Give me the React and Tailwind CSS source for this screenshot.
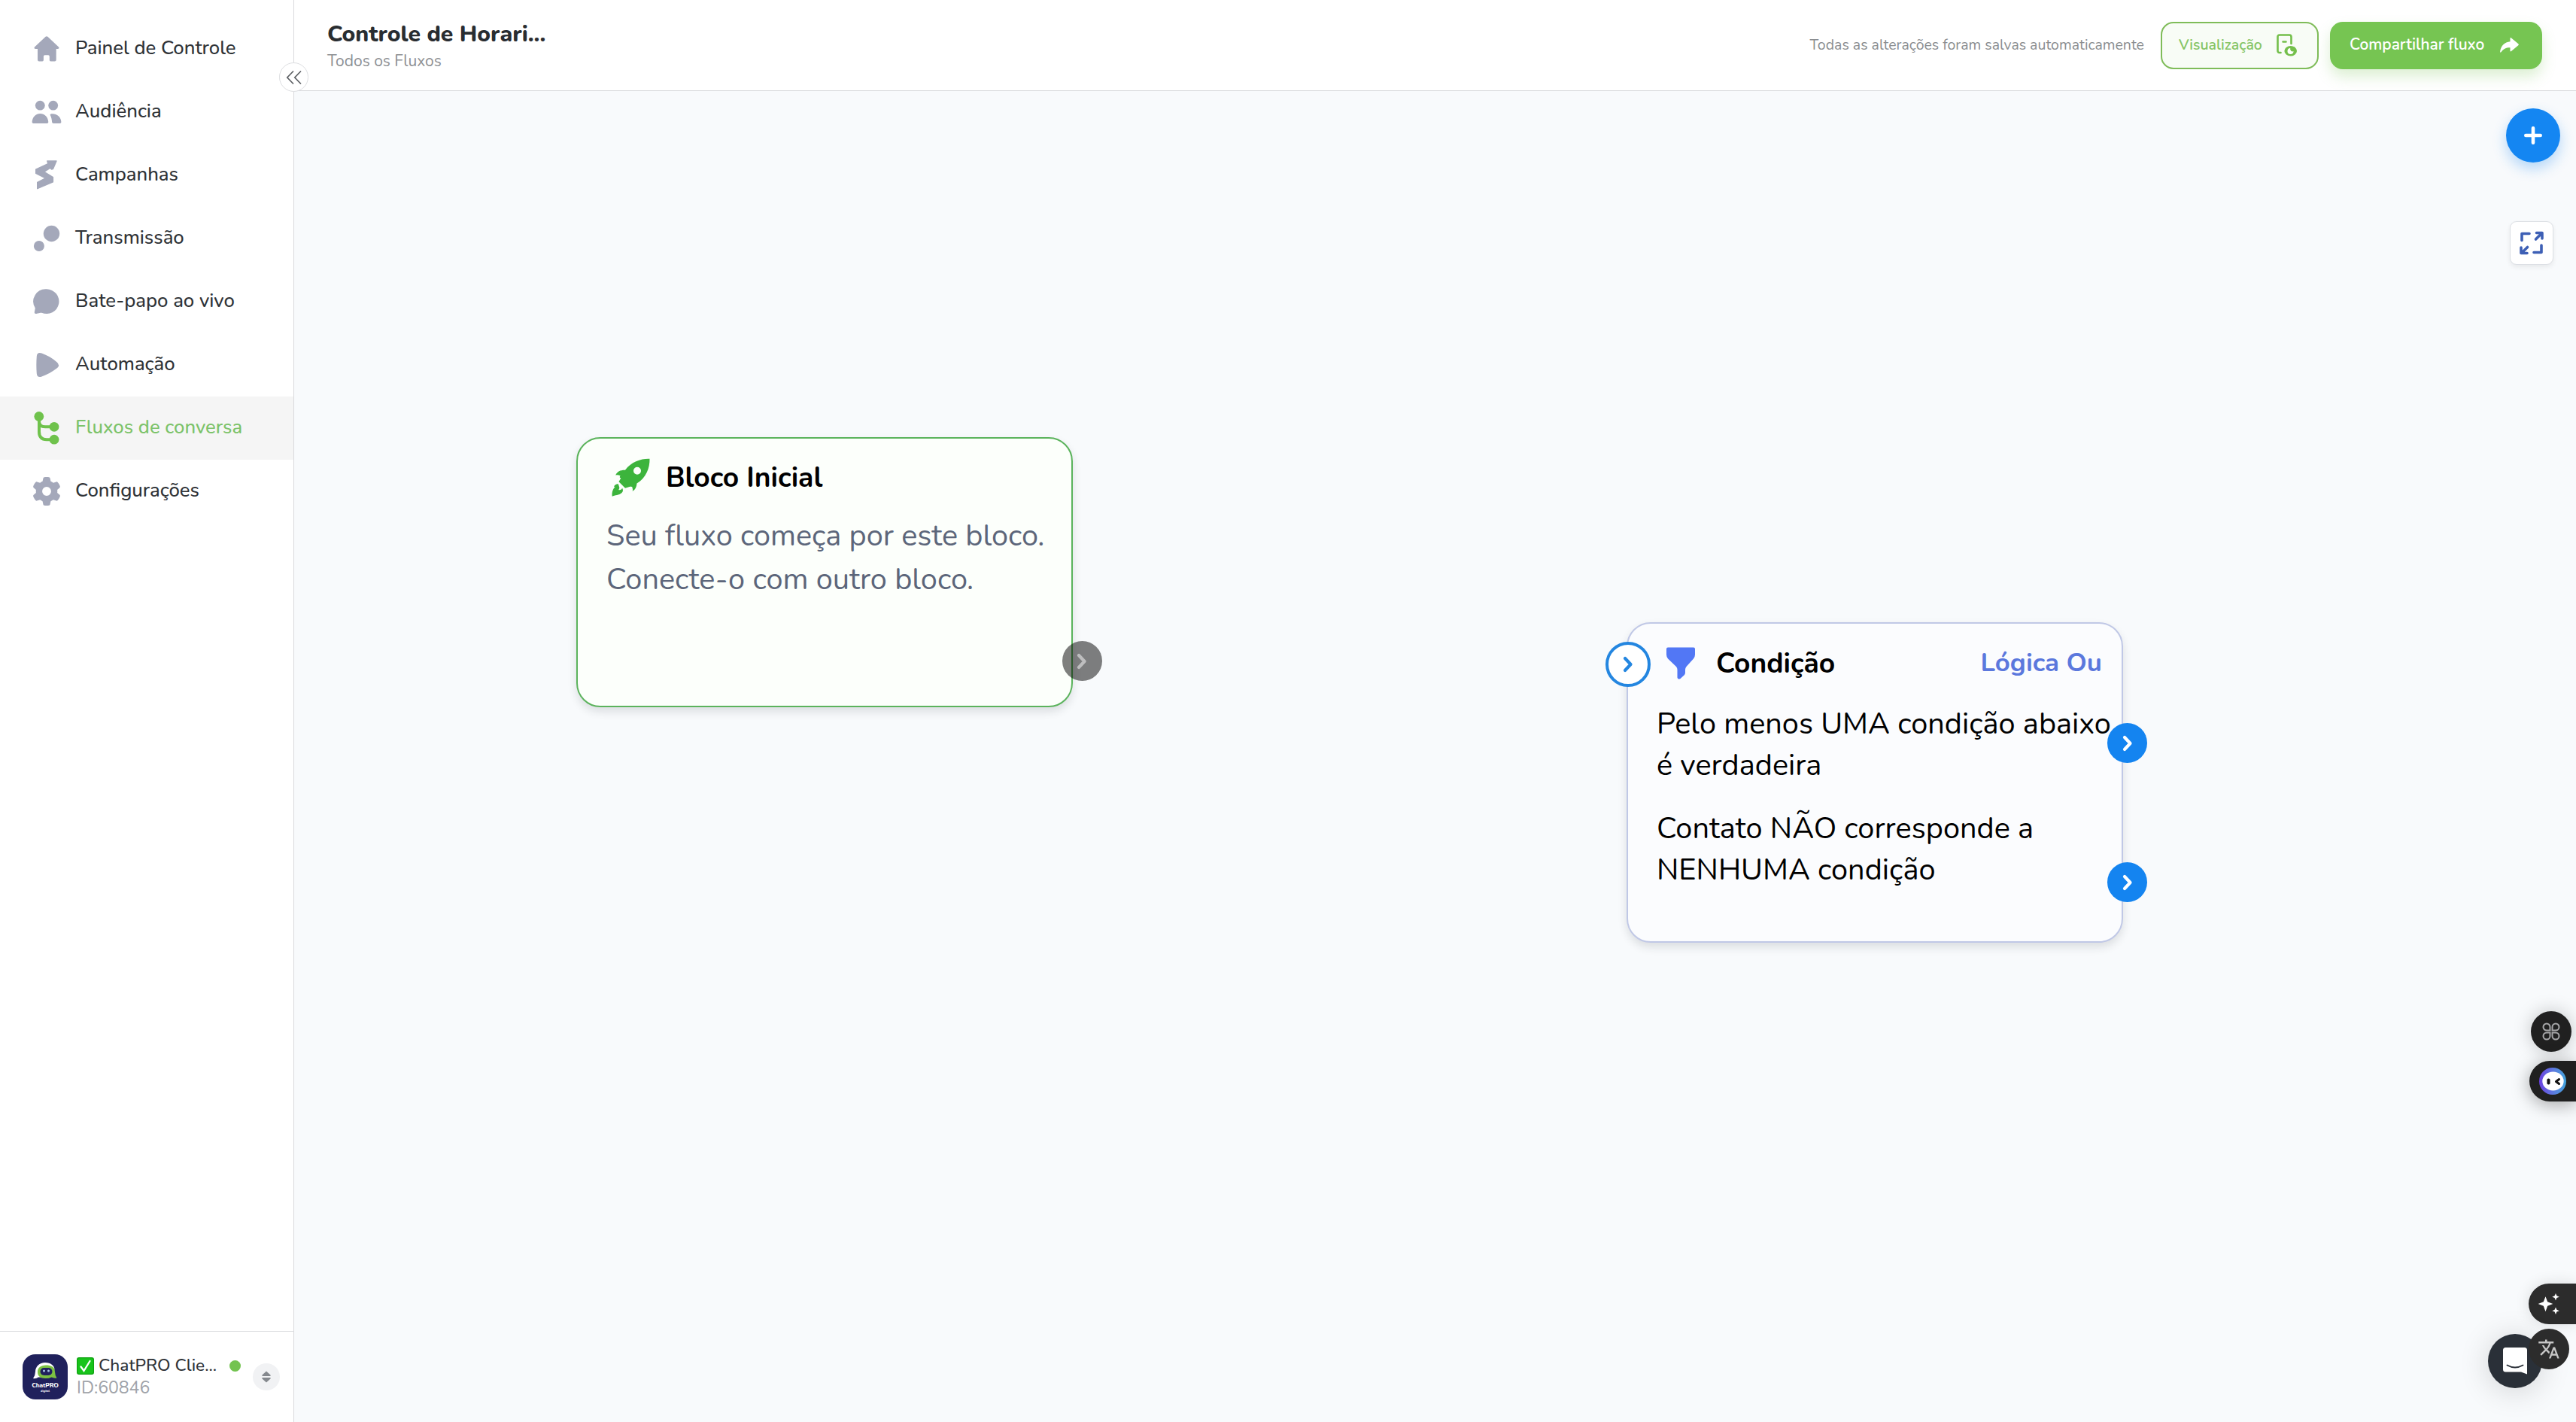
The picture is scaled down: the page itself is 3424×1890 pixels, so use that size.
import { FaGear } from "react-icons/fa6";
import { MdTranslate } from "react-icons/md";

function HomeIcon() {
  return (
    <svg className="size-11" viewBox="0 0 44 44" fill="currentColor">
      <path d="M20.6 5.8Q22 4.6 23.4 5.8L38 19.6Q39.4 21.8 37 21.9H34.7V36.4Q34.7 38.4 32.7 38.4H27.4Q25.8 38.4 25.8 36.8V32Q25.8 30.3 24.1 30.3H19.6Q17.9 30.3 17.9 32V36.8Q17.9 38.4 16.3 38.4H12Q10 38.4 10 36.4V21.9H7Q4.6 21.8 6 19.6Z" />
    </svg>
  );
}

function AudienceIcon() {
  return (
    <svg className="size-11" viewBox="0 0 44 44" fill="currentColor">
      <circle cx="13.3" cy="13.2" r="6.4" />
      <circle cx="30.7" cy="13.2" r="6.4" />
      <path d="M2.6 35.2C3.2 28.2 7.8 24 13.4 24s10.4 4.2 10.9 11.2q0 1.8-1.8 1.8H4.4q-1.8 0-1.8-1.8Z" />
      <path d="M27.6 24.4c7.6-.8 13.4 3.6 13.8 10.8q0 1.8-1.8 1.8H31q-1.7 0-1.9-1.7c-.2-3.5-.8-6.2-2.3-9.3q-.6-1.5.8-1.6Z" />
    </svg>
  );
}

function CampaignIcon() {
  return (
    <svg className="size-11" viewBox="0 0 44 44" fill="currentColor" stroke="currentColor" strokeWidth="1.4" strokeLinejoin="round">
      <path d="M22.8 3H35L30.5 13.5 28.5 14 26.5 12.3 18.6 17.4 30.4 24.6V30.8L9.7 39.7V31.4L20.5 26 7.7 19.4V14.2L23.8 6.6Z" />
    </svg>
  );
}

function BroadcastIcon() {
  return (
    <svg className="size-11" viewBox="0 0 44 44" fill="currentColor">
      <circle cx="28.5" cy="15.5" r="10.7" />
      <circle cx="11.9" cy="32" r="7" />
    </svg>
  );
}

function ChatIcon() {
  return (
    <svg className="size-11" viewBox="0 0 44 44" fill="currentColor">
      <path d="M22 5.3a16.4 16.4 0 1 1-6.6 31.4c-1.4-.2-4.6.6-7 1.2q-3.2.5-2.5-2.3l.9-5.2A16.4 16.4 0 0 1 22 5.3Z" />
    </svg>
  );
}

function PlayIcon() {
  return (
    <svg className="size-11" viewBox="0 0 44 44" fill="currentColor">
      <path d="M8.8 10.5C9 6.5 11.5 5 15.5 6.5c7 2.5 14 6.5 20 11.7q5 4.3 0 8.4c-6 4.7-12.5 8.4-20 11-4 1.4-6.4-.2-6.7-4.1-.6-7.6-.6-15.4 0-23Z" />
    </svg>
  );
}

function FlowIcon() {
  return (
    <svg className="size-11 text-[#6fc24c]" viewBox="0 0 44 44" fill="none" stroke="currentColor" strokeWidth="4">
      <path d="M12 6v21q0 10 10 10.3h10M12 13q0 7.3 8 7.3h12" />
      <g fill="currentColor" stroke="none">
        <circle cx="11.8" cy="6.5" r="6.4" />
        <circle cx="32" cy="20.3" r="6.4" />
        <circle cx="32" cy="37.2" r="6.4" />
      </g>
    </svg>
  );
}

function SettingsIcon() {
  return (
    <span className="flex size-11 items-center justify-center">
      <FaGear size={38} />
    </span>
  );
}

const menu = [
  { label: "Painel de Controle", Icon: HomeIcon },
  { label: "Audiência", Icon: AudienceIcon },
  { label: "Campanhas", Icon: CampaignIcon },
  { label: "Transmissão", Icon: BroadcastIcon },
  { label: "Bate-papo ao vivo", Icon: ChatIcon },
  { label: "Automação", Icon: PlayIcon },
  { label: "Fluxos de conversa", Icon: FlowIcon, active: true },
  { label: "Configurações", Icon: SettingsIcon },
];

function AccountLogo() {
  return (
    <div className="flex size-[60px] shrink-0 flex-col items-center rounded-[17px] bg-[#20215c] pt-[10px]">
      <svg className="h-[25px] w-8" viewBox="0 0 32 25">
        <path d="M16 1C8.5 1 3 6.5 3 13q0 4.500-3 9 4 1 7-1.500h9Z" fill="#fff" />
        <path d="M16 1c7.5 0 12 4 12.500 9L18 20H8Z" fill="#fff" />
        <path d="M17 4.500c7 0 12 2.500 12 9q0 4 2.500 8-4 .5-7-1-3 1.500-8 1.500C9.500 22 6 19 6 13.500S10 4.500 17 4.500Z" fill="#7cc142" />
        <rect x="9.5" y="8" width="16" height="10" rx="5" fill="#20215c" />
        <circle cx="14.5" cy="12" r="1.5" fill="#a8c8e8" />
        <circle cx="20.5" cy="12" r="1.5" fill="#a8c8e8" />
      </svg>
      <span className="mt-[2px] text-[8.3px] leading-[10px] font-extrabold tracking-[-0.1px] text-white">ChatPRO</span>
      <span className="text-[4px] leading-[4px] font-bold text-white">digital</span>
    </div>
  );
}

function Sidebar() {
  return (
    <aside className="relative flex w-[391px] shrink-0 flex-col border-r border-[#d9dadd] bg-white">
      <nav className="flex flex-1 flex-col pt-[23px]">
        {menu.map(({ label, Icon, active }) => (
          <a
            key={label}
            className={`flex h-[84px] items-center gap-4 pl-10 text-[25.7px] font-medium ${
              active ? "bg-[#f5f5f5] text-[#7cc36a]" : "text-[#2f3337]"
            }`}
          >
            <span className={active ? "" : "text-[#a4a8ba]"}>
              <Icon />
            </span>
            <span className="pb-[2px]">{label}</span>
          </a>
        ))}
      </nav>

      <div className="flex h-[121px] items-center border-t border-[#dcdee0] pl-[30px]">
        <AccountLogo />
        <div className="ml-3 w-[188px]">
          <div className="flex h-[30px] items-center text-[22.7px] leading-[30px] font-medium text-[#2f3337]">
            <svg className="size-[23px]" viewBox="0 0 23 23">
              <rect width="23" height="23" rx="3" fill="#0fa312" />
              <rect x="1.2" y="1.2" width="20.6" height="20.6" rx="2.5" fill="#18c41b" />
              <path d="M5.5 12.5 9.5 18 17.5 5" fill="none" stroke="#fff" strokeWidth="2.3" strokeLinecap="round" />
            </svg>
            <span className="ml-[6px] whitespace-nowrap">ChatPRO Clie...</span>
          </div>
          <p className="text-[23px] leading-[30px] text-[#a0a3a9]">ID:60846</p>
        </div>
        <span className="mb-[30px] ml-[15px] size-[15px] rounded-full bg-[#73c350]" />
        <button type="button" className="ml-4 flex size-9 items-center justify-center rounded-full bg-[#f1f2f4]">
          <svg className="h-4 w-3" viewBox="0 0 12 16" fill="#85898e">
            <path d="M6 .5 11.5 5.5q.8 1.5-.8 1.5H1.3Q-.3 7 .5 5.5ZM6 15.5.5 10.5Q-.3 9 1.3 9h9.4q1.6 0 .8 1.5Z" />
          </svg>
        </button>
      </div>

      <button
        type="button"
        className="absolute top-[83px] right-[-20px] z-10 flex size-[39px] items-center justify-center rounded-full border border-[#dddee1] bg-white"
      >
        <svg className="h-5 w-[22px]" viewBox="0 0 22 20" fill="none" stroke="#5c5f63" strokeWidth="1.7">
          <path d="M10 1.5 1.8 10l8.2 8.5M20 1.5 11.8 10l8.2 8.5" />
        </svg>
      </button>
    </aside>
  );
}

function Header() {
  return (
    <header className="flex h-[121px] shrink-0 items-center border-b border-[#d9dadd] bg-white pr-[45px] pl-11">
      <div>
        <h1 className="text-[30.2px] leading-[42px] font-extrabold text-[#292d31]">Controle de Horari...</h1>
        <p className="text-[21px] leading-[30px] text-[#8e9093]">Todos os Fluxos</p>
      </div>
      <p className="ml-auto text-[19.5px] text-[#8b8e91]">Todas as alterações foram salvas automaticamente</p>
      <button
        type="button"
        className="ml-[22px] flex h-[63px] w-[210px] items-center rounded-[17px] border-2 border-[#7fbc59] bg-[#f8fcf6] pl-[22px] text-[19.5px] font-semibold text-[#86c566]"
      >
        <span>Visualização</span>
        <svg className="ml-[19px] h-[30px] w-7" viewBox="0 0 28 30" fill="none" stroke="#74bf4b" strokeWidth="2.6" strokeLinecap="round">
          <path d="M5.5 25H4q-2.5 0-2.5-2.5V4Q1.5 1.5 4 1.5h13Q19.5 1.5 19.5 4v9M8.5 10.5h4" />
          <ellipse cx="18.7" cy="22.8" rx="8.3" ry="6.8" fill="#74bf4b" stroke="none" />
          <path d="M18.2 19.1a4 4 0 1 0 4.3 4q-2 .8-3.4-.6t-.9-3.4Z" fill="#fff" stroke="none" />
        </svg>
      </button>
      <button
        type="button"
        className="ml-[15px] flex h-[63px] w-[282px] items-center rounded-[17px] bg-[#76c552] pl-[26px] text-[20.9px] font-semibold text-white shadow-[0_10px_18px_rgba(118,197,82,0.25)]"
      >
        <span>Compartilhar fluxo</span>
        <svg className="ml-[21px] h-5 w-[25px]" viewBox="0 0 25 20" fill="#fff">
          <path d="M13.5 1.2Q13.5-.6 15 .6L24.3 8.3Q25.3 9.3 24.3 10.3L15 18Q13.5 19 13.5 17.4V13.3C8 13.2 4.5 15 1.7 19 .4 20.4 0 19.7.2 18 1.2 11 6 5.8 13.5 5.2Z" />
        </svg>
      </button>
    </header>
  );
}

function Chevron({ color }) {
  return (
    <svg className="h-6 w-4" viewBox="0 0 16 24" fill="none" stroke={color} strokeWidth="4.2" strokeLinecap="round" strokeLinejoin="round">
      <path d="M4 4 11.5 12 4 20" />
    </svg>
  );
}

function OutputPort({ className }) {
  return (
    <span className={`absolute flex size-[53px] items-center justify-center rounded-full ${className}`}>
      <Chevron color="#fff" />
    </span>
  );
}

function StartBlock() {
  return (
    <div className="absolute top-[460px] left-[375px] h-[359px] w-[660px] rounded-[32px] border-2 border-[#5bb35c] bg-[#fcfffb] pt-[21px] pl-[38px] shadow-[0_6px_12px_rgba(30,40,50,0.13)]">
      <div className="flex h-[60px] items-center">
        <svg className="ml-[7px] size-[51px]" viewBox="0 0 51 51" fill="#3cb43c">
          <path
            fillRule="evenodd"
            d="M50.5.8C40 .3 26 4.5 18 15.8 12 15.6 7.500 17.500 5.200 22.500q3-.6 6.300.8-1.800 2.800.8 3.200l-2.800 4.700q3.500 3.500 8.500 8.600l6.500-2q2.500-.6 3 1 1 3.700.2 5.200 5.300-3 5.800-10.500C46 26 50.800 13 50.500.8ZM34 11.800a5 5 0 1 1 0 10 5 5 0 1 1 0-10Z"
          />
          <path d="M8.8 34.300c-2.300-.3-4.800 1-5.800 3.500l1.500.2C.8 42 .2 46.500.7 50.800 4 49 10 49.300 13.500 46c2-2 1.700-4 .7-6.300-1.200 2.300-3.500 3-5 2.200 1-1.500 1.500-2.500.8-4Z" />
        </svg>
        <h2 className="ml-[21px] pt-px text-[37.2px] font-bold text-black">Bloco Inicial</h2>
      </div>
      <p className="mt-[19px] text-[39.7px] leading-[58px] whitespace-nowrap text-[#5c667a]">
        Seu fluxo começa por este bloco.
        <br />
        Conecte-o com outro bloco.
      </p>
      <OutputPort className="top-[269px] left-[643.5px] bg-black/50 [&>svg]:opacity-50" />
    </div>
  );
}

function ConditionBlock() {
  return (
    <div className="absolute top-[706px] left-[1771px] h-[426px] w-[660px] rounded-[32px] border-2 border-[#c0c8e6] bg-[#fbfcfe] pt-[22px] pl-[38px] text-black shadow-[0_6px_12px_rgba(30,40,50,0.13)]">
      <span className="absolute top-[24px] left-[-30px] flex size-[60px] items-center justify-center rounded-full border-4 border-[#2486e0] bg-white">
        <Chevron color="#2486e0" />
      </span>
      <div className="flex h-[60px] items-center pr-[26px]">
        <svg className="ml-[13px] h-[43px] w-[38px]" viewBox="0 0 38 43" fill="#5277f5">
          <path d="M2 .5h34q2 0 2 2V10q0 3-2 5.5L26.5 26Q25 28 25 30v4q0 1.5-1 3l-5.5 5q-3.5 1.5-4-1.5V30q0-2-1.5-4L2 15.5Q0 13 0 10V2.5Q0 .5 2 .5Z" />
        </svg>
        <h2 className="ml-7 pt-px text-[37.2px] font-bold">Condição</h2>
        <span className="ml-auto text-[34.8px] font-bold text-[#5b78dd]">Lógica Ou</span>
      </div>
      <p className="mt-6 text-[39.7px] leading-[55px] whitespace-nowrap">
        Pelo menos UMA condição abaixo
        <br />é verdadeira
      </p>
      <p className="mt-[29px] text-[39.7px] leading-[55px] whitespace-nowrap">
        Contato NÃO corresponde a
        <br />
        NENHUMA condição
      </p>
      <OutputPort className="top-[132px] left-[637px] bg-[#1484f0]" />
      <OutputPort className="top-[317px] left-[637px] bg-[#1484f0]" />
    </div>
  );
}

function FloatingTools() {
  return (
    <>
      <button
        type="button"
        className="absolute top-[144px] right-[21px] flex size-[72px] items-center justify-center rounded-full bg-[#1486f2] shadow-[0_8px_18px_rgba(20,134,242,0.3)]"
      >
        <svg className="size-6" viewBox="0 0 24 24" stroke="#fff" strokeWidth="4.6" strokeLinecap="round">
          <path d="M12 2.3v19.4M2.3 12h19.4" />
        </svg>
      </button>
      <button
        type="button"
        className="absolute top-[294px] right-[30px] flex size-[58px] items-center justify-center rounded-[9px] border border-[#dcdfe4] bg-white shadow-[0_3px_6px_rgba(0,0,0,0.07)]"
      >
        <svg className="size-8" viewBox="0 0 32 32" fill="none" stroke="#3d5fb5" strokeWidth="3.6" strokeLinecap="round" strokeLinejoin="round">
          <path d="M3 12.5V3.5h10M29 19v9.500H19M21.500 11 28.500 4M22.500 2.500H30v7.500M10.500 21.500 3.500 28.500M2 22v7.500h8" />
        </svg>
      </button>

      <button
        type="button"
        className="absolute top-[1344px] right-[6px] flex size-[54px] items-center justify-center rounded-full bg-[#202020] shadow-[0_0_24px_rgba(0,0,0,0.22)]"
      >
        <svg className="size-6" viewBox="0 0 24 24" fill="none" stroke="#a6a6a8" strokeWidth="2">
          <path d="M10.5 10.5V6a4.5 4.5 0 1 0-4.5 4.5ZM13.5 10.5V6a4.5 4.5 0 1 1 4.5 4.5ZM10.5 13.5V18a4.5 4.5 0 1 1-4.5-4.5ZM13.5 13.5V18a4.5 4.5 0 1 0 4.5-4.5Z" />
        </svg>
      </button>
      <div className="absolute top-[1410px] right-0 flex h-[54px] w-[62px] items-center rounded-l-full bg-[#202020] pl-[13px] shadow-[0_4px_24px_rgba(0,0,0,0.35)]">
        <span className="flex size-9 items-center justify-center rounded-full bg-linear-to-r from-[#6a3fe0] to-[#3fa4dc]">
          <svg className="h-[26px] w-[29px]" viewBox="0 0 29 26">
            <ellipse cx="14.5" cy="13" rx="14.2" ry="12.5" fill="#fff" />
            <rect x="6.5" y="9.5" width="4" height="8" rx="1.8" fill="#111" />
            <path d="M22.5 10.5 18.5 13.5l4 3" fill="none" stroke="#111" strokeWidth="3" strokeLinecap="round" strokeLinejoin="round" />
          </svg>
        </span>
      </div>

      <div className="absolute top-[1706px] right-0 h-[54px] w-[63px] rounded-l-full bg-[#2c2c2c] pt-[13px] pl-3 shadow-[0_0_20px_rgba(0,0,0,0.12)]">
        <svg className="h-[29px] w-[30px]" viewBox="0 0 30 29" fill="#fff">
          <path d="M10.5 4.2 13.2 11.2 20.3 14 13.2 16.800 10.500 24.200 7.800 16.800.7 14 7.800 11.200ZM24 0 25.400 3.300 28.800 4.700 25.400 6 24 9.500 22.600 6 19.300 4.700 22.600 3.300ZM24 18.500 25.400 21.800 28.800 23.200 25.400 24.500 24 28 22.600 24.500 19.300 23.200 22.600 21.800Z" />
        </svg>
      </div>
      <button
        type="button"
        className="absolute top-[1773px] right-[45px] flex size-[72px] items-center justify-center rounded-full bg-[#2a3038] shadow-[0_4px_40px_rgba(0,0,0,0.16)]"
      >
        <svg className="h-9 w-8" viewBox="0 0 32 36">
          <path d="M3.5 0h25Q32 0 32 3.5V35.5L24 32.5H3.5Q0 32.5 0 29V3.5Q0 0 3.5 0Z" fill="#fff" />
          <path d="M5.5 23.5q10.5 6 21 0" fill="none" stroke="#2a3038" strokeWidth="1.9" strokeLinecap="round" />
        </svg>
      </button>
      <button
        type="button"
        className="absolute top-[1766px] right-[9px] flex size-[54px] items-center justify-center rounded-full bg-[#2c2c2c] text-[#c6c6c6]"
      >
        <MdTranslate size={30} />
      </button>
    </>
  );
}

export default function App() {
  return (
    <div className="relative flex h-[1890px] w-[3424px] overflow-hidden bg-[#f8fafc] font-['Nunito',Lato,sans-serif]">
      <Sidebar />
      <div className="flex flex-1 flex-col">
        <Header />
        <main className="relative flex-1">
          <StartBlock />
          <ConditionBlock />
        </main>
      </div>
      <FloatingTools />
    </div>
  );
}
